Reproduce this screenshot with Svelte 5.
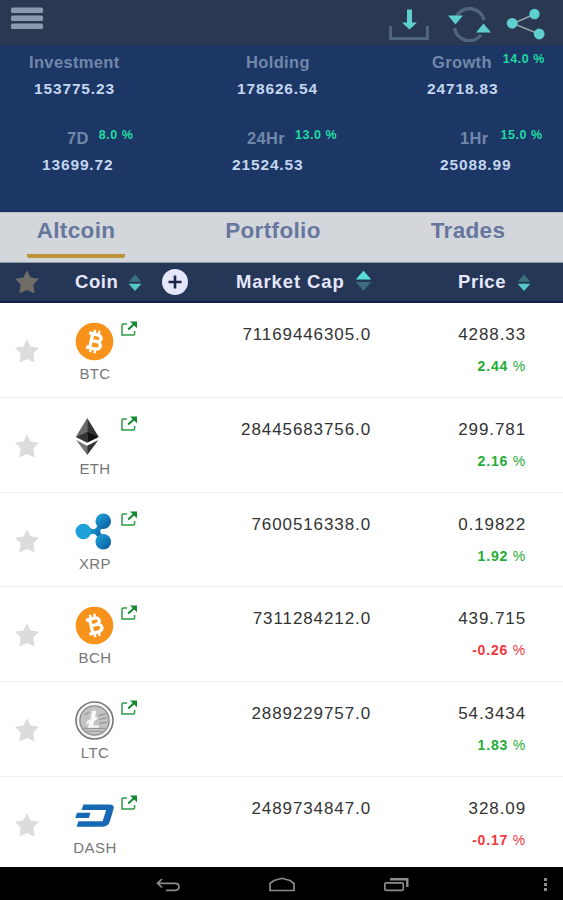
<script>
	const stats = [
		{ id: 'investment', label: 'Investment', value: '153775.23' },
		{ id: 'holding', label: 'Holding', value: '178626.54' },
		{ id: 'growth', label: 'Growth', change: '14.0 %', value: '24718.83' },
		{ id: 'week', label: '7D', change: '8.0 %', value: '13699.72' },
		{ id: 'day', label: '24Hr', change: '13.0 %', value: '21524.53' },
		{ id: 'hour', label: '1Hr', change: '15.0 %', value: '25088.99' }
	];

	const tabs = ['Altcoin', 'Portfolio', 'Trades'];
	let active = $state('Altcoin');

	const coins = [
		{ code: 'BTC', cap: '71169446305.0', price: '4288.33', change: '2.44' },
		{ code: 'ETH', cap: '28445683756.0', price: '299.781', change: '2.16' },
		{ code: 'XRP', cap: '7600516338.0', price: '0.19822', change: '1.92' },
		{ code: 'BCH', cap: '7311284212.0', price: '439.715', change: '-0.26' },
		{ code: 'LTC', cap: '2889229757.0', price: '54.3434', change: '1.83' },
		{ code: 'DASH', cap: '2489734847.0', price: '328.09', change: '-0.17' }
	];
</script>

{#snippet star()}
	<svg class="star" viewBox="0 0 26 26">
		<path d="M13 1.2 16.6 8.6 25 9.8 19.4 15.6 20.6 24.4 13 21 5.4 24.4 6.6 15.6 1 9.8 9.4 8.6Z" />
	</svg>
{/snippet}

{#snippet sort(up)}
	<svg class="sort" class:up viewBox="0 0 14 18">
		<path class="top" d="M7 0.6 13.4 7.8H.6Z" />
		<path class="bottom" d="M7 17 13.4 9.8H.6Z" />
	</svg>
{/snippet}

{#snippet bitcoin(angle)}
	<circle cx="20" cy="20" r="19.3" fill="#f7931a" />
	<g transform="rotate({angle} 20 20)" fill="none" stroke="#fff">
		<path stroke-width="3.4" d="M12.8 12.6H21.6C27.4 12.6 27.4 19.6 21.6 19.6H16.4M21.6 19.6C28.6 19.6 28.6 27.4 21.8 27.4H12.8M16.6 12.6V27.4" />
		<path stroke-width="2.5" d="M18 8.2V13M22.6 8.2V13M18 27V31.8M22.6 27V31.8" />
	</g>
{/snippet}

<div class="app">
	<header>
		<svg class="menu" viewBox="0 0 34 24">
			<g fill="#8b9bae">
				<rect x="1" y="0.5" width="32" height="5.5" rx="1.5" />
				<rect x="1" y="8.5" width="32" height="5.5" rx="1.5" />
				<rect x="1" y="16.5" width="32" height="5.5" rx="1.5" />
			</g>
		</svg>
		<svg class="download" viewBox="0 0 40 34">
			<path d="M1.6 19V31.4H38.4V19" fill="none" stroke="#52657f" stroke-width="3" />
			<path d="M18 2.5H23V15.5H28L20.5 22.5 13 15.5H18Z" fill="#5ecfcf" />
		</svg>
		<svg class="refresh" viewBox="0 0 44 36">
			<g fill="none" stroke="#52657f" stroke-width="3.4">
				<path d="M8 11A15 15 0 0 1 36 14" />
				<path d="M6.5 22A15 15 0 0 0 33 29" />
			</g>
			<path d="M0 9.5H15L7.5 18.5ZM28 26.5H43L35.5 17.5Z" fill="#5ecfcf" />
		</svg>
		<svg class="share" viewBox="0 0 40 34">
			<path d="M29 7 7 16.5 33 27" fill="none" stroke="#9aa3a8" stroke-width="1.4" />
			<g fill="#5ecfcf">
				<circle cx="28.5" cy="7" r="5.2" />
				<circle cx="6.2" cy="16.3" r="5.4" />
				<circle cx="33.2" cy="27" r="5.4" />
			</g>
		</svg>
	</header>

	<section class="stats">
		{#each stats as stat}
			<div class="stat {stat.id}">
				<div class="label">
					{stat.label}
					{#if stat.change}<span>{stat.change}</span>{/if}
				</div>
				<div class="value">{stat.value}</div>
			</div>
		{/each}
	</section>

	<nav class="tabs">
		{#each tabs as tab}
			<button class:active={tab === active} onclick={() => (active = tab)}>{tab}</button>
		{/each}
	</nav>

	<div class="head">
		<div class="fav">{@render star()}</div>
		<div class="h-coin">Coin {@render sort(false)}</div>
		<svg class="add" viewBox="0 0 28 28">
			<circle cx="14" cy="14" r="13" fill="#e6e6fb" />
			<path d="M14 7.5V20.5M7.5 14H20.5" stroke="#1c2547" stroke-width="2.6" />
		</svg>
		<div class="h-cap">Market Cap {@render sort(true)}</div>
		<div class="h-price">Price {@render sort(false)}</div>
	</div>

	<main>
		{#each coins as coin}
			<div class="row">
				<div class="fav">{@render star()}</div>
				<div class="coin">
					<svg viewBox="0 0 40 40">
						{#if coin.code === 'BTC'}
							{@render bitcoin(13)}
						{:else if coin.code === 'BCH'}
							{@render bitcoin(-14)}
						{:else if coin.code === 'ETH'}
							<path d="M12.5 1V16.5L.8 20.4Z" fill="#6b6b6b" />
							<path d="M12.5 1 24.4 20.4 12.5 16.5Z" fill="#343434" />
							<path d="M.8 20.4 12.5 15.5V26.5Z" fill="#333" />
							<path d="M24.4 20.4 12.5 15.5V26.5Z" fill="#111" />
							<path d="M1.2 23.5 12.5 29.5V39Z" fill="#777" />
							<path d="M24 23.5 12.5 29.5V39Z" fill="#333" />
						{:else if coin.code === 'XRP'}
							<defs>
								<linearGradient id="xrp" x1="0" y1="0" x2="1" y2="1">
									<stop offset="0" stop-color="#20a8dc" />
									<stop offset="1" stop-color="#0a559c" />
								</linearGradient>
							</defs>
							<g fill="url(#xrp)">
								<path d="M14 15.5C18 19 21.5 18.5 23.5 13L30 16.5C24.5 17 24.5 23 30 23.5L23.5 27C21.5 21.5 18 21 14 24.5Z" />
								<circle cx="29" cy="9.5" r="8" />
								<circle cx="29" cy="30.5" r="8" />
							</g>
							<circle cx="8.6" cy="20" r="8" fill="#1da1d8" />
						{:else if coin.code === 'LTC'}
							<circle cx="20" cy="20" r="19" fill="#f5f5f5" stroke="#777" stroke-width="1.6" />
							<circle cx="20" cy="20" r="15" fill="#c3c3c3" stroke="#888" stroke-width="1.3" />
							<path d="M24 15 32 13M25 19 33 17M25 23 33 22M9 28H31M12 31H28M10 14 15 11" stroke="#969696" stroke-width="1.2" />
							<path d="M17.5 10H22L20.5 17 23 16 22.2 19 19.6 20.5 18.8 25H25L24 27.5H13L15 22.5 11.5 24 12.4 20.6 15.8 19Z" fill="#f7f7f7" />
						{:else}
							<path fill="#1769b3" d="M8.6 8.6H35.5Q41 8.6 39.3 14L35.8 26Q34 31.6 28.5 31.6H1.6L3.5 25.8H28.3L32 14.4H6.7Z" />
							<path fill="#1769b3" d="M2 17.2H15.8L14.2 22.5H.3Z" />
						{/if}
					</svg>
					<div class="code">{coin.code}</div>
				</div>
				<svg class="link" viewBox="0 0 17 16">
					<path d="M6 3H2.2Q1 3 1 4.2V14H12.4Q13.6 14 13.6 12.8V10" fill="none" stroke="#2b9c46" stroke-width="1.5" />
					<path d="M7.2 8.6 13 3.2" stroke="#128a2e" stroke-width="2" />
					<path d="M9 .5H16V7.3Z" fill="#128a2e" />
				</svg>
				<div class="cap">{coin.cap}</div>
				<div class="price">
					{coin.price}
					<div class="change" class:down={coin.change.startsWith('-')}>{coin.change} <span>%</span></div>
				</div>
			</div>
		{/each}
	</main>

	<footer>
		<svg viewBox="0 0 423 33">
			<g fill="none" stroke="#8c8c8c" stroke-width="1.7">
				<path d="M22 12 17.5 16.3 22 20.5M18 16.3H35Q39 16.3 39 19.8T35 23.3H26" />
				<path d="M130 23.5V16.5L134 13.5 142 11.3 150 13.5 154 16.5V23.5Z" />
				<rect x="244.8" y="15.8" width="18.5" height="7.6" rx="1.5" />
				<path d="M250 12.3H267.3V20" stroke-width="2.4" />
			</g>
			<path d="M404 11h3v3h-3zM404 16h3v3h-3zM404 21h3v3h-3z" fill="#8c8c8c" />
		</svg>
	</footer>
</div>

<style>
	:global(body) {
		background: #fff;
	}

	.app {
		display: flex;
		flex-direction: column;
		width: 563px;
		height: 900px;
		overflow: hidden;
		font-family: 'Liberation Sans', Arial, sans-serif;
	}

	svg {
		display: block;
		flex: none;
	}

	header {
		display: flex;
		align-items: flex-start;
		height: 45px;
		flex: none;
		box-sizing: border-box;
		padding: 7px 17px 0 10px;
		background: #2a3852;
	}

	.menu {
		width: 34px;
		height: 24px;
		margin-right: auto;
	}

	.download {
		width: 40px;
		height: 34px;
		margin-right: 19px;
	}

	.refresh {
		width: 44px;
		height: 36px;
		margin: -1px 14px 0 0;
	}

	.share {
		width: 40px;
		height: 34px;
	}

	.stats {
		display: grid;
		grid-template-columns: 188px 188px 187px;
		grid-template-rows: 76px 76px;
		height: 167px;
		flex: none;
		box-sizing: border-box;
		padding-top: 4px;
		background: #1c3666;
		border-bottom: 1px solid #102d58;
		font-weight: bold;
		white-space: nowrap;
	}

	.label {
		display: flex;
		height: 27px;
		font-size: 16.5px;
		line-height: 26px;
		letter-spacing: 0.35px;
		color: #7188a9;
	}

	.label span {
		margin: -3px 0 0 10px;
		font-size: 12.5px;
		letter-spacing: 0.5px;
		color: #1fdca2;
	}

	.value {
		font-size: 15.5px;
		line-height: 26px;
		letter-spacing: 0.85px;
		color: #c3d6ee;
	}

	.investment {
		padding-left: 29px;
	}

	.investment .value {
		padding-left: 5px;
	}

	.holding {
		padding-left: 58px;
	}

	.holding .value {
		margin-left: -9px;
	}

	.growth {
		padding-left: 56px;
	}

	.growth .value {
		margin-left: -5px;
	}

	.growth .label span {
		margin-left: 11px;
	}

	.week {
		padding-left: 67px;
	}

	.week .value {
		margin-left: -25px;
	}

	.day {
		padding-left: 59px;
	}

	.day .value {
		margin-left: -15px;
	}

	.hour {
		padding-left: 84px;
	}

	.hour .value {
		margin-left: -20px;
	}

	.hour .label span {
		margin-left: 12px;
	}

	.tabs {
		display: flex;
		height: 51px;
		flex: none;
		box-sizing: border-box;
		padding-left: 27px;
		background: #d3d7dc;
		border-top: 1px solid #bcc5cf;
		border-bottom: 1px solid #8f9aa6;
	}

	.tabs button {
		width: 98px;
		height: 45px;
		padding: 0 0 5px;
		border: 0;
		border-bottom: 4px solid transparent;
		border-radius: 2px;
		background: none;
		font: bold 22.5px/28px 'Liberation Sans', Arial, sans-serif;
		letter-spacing: 0.35px;
		color: #66769d;
	}

	.tabs button:nth-child(2) {
		margin-left: 99px;
	}

	.tabs button:nth-child(3) {
		margin-left: 97px;
	}

	.tabs .active {
		border-bottom-color: #bd9239;
	}

	.head {
		display: flex;
		align-items: center;
		height: 40px;
		flex: none;
		box-sizing: border-box;
		background: #253657;
		border-bottom: 2px solid #15194b;
		font-size: 18.5px;
		font-weight: bold;
		letter-spacing: 0.55px;
		color: #e6e7fb;
		white-space: nowrap;
	}

	.fav {
		width: 54px;
	}

	.star {
		width: 26px;
		height: 26px;
		margin: 0 auto;
		fill: #dcdcdc;
	}

	.head .star {
		fill: #706c66;
	}

	.h-coin,
	.h-cap,
	.h-price {
		display: flex;
		align-items: center;
		gap: 10px;
	}

	.h-coin {
		width: 86px;
		margin-left: 21px;
	}

	.h-cap {
		width: 222px;
		margin-left: 47px;
		letter-spacing: 0.9px;
	}

	.add {
		width: 28px;
		height: 28px;
	}

	.sort {
		width: 14px;
		height: 18px;
		margin-top: 2px;
		fill: #55c9c9;
	}

	.sort .top {
		fill: #38717c;
	}

	.sort.up {
		width: 17px;
		height: 22px;
		margin-top: -3px;
	}

	.sort.up .top {
		fill: #58dddd;
	}

	.sort.up .bottom {
		fill: #3b6d7c;
	}

	.h-price .sort {
		margin-left: 1px;
	}

	main {
		height: 564px;
		flex: none;
		overflow: hidden;
	}

	.row {
		display: flex;
		height: 94.8px;
		box-sizing: border-box;
		padding-top: 20px;
		border-bottom: 1.5px solid #eee;
	}

	.row .star {
		margin-top: 15px;
	}

	.coin {
		width: 42px;
		margin-left: 20px;
	}

	.coin svg {
		width: 39px;
		height: 39px;
		margin: -1px 0 0 1px;
	}

	.code {
		display: flex;
		justify-content: center;
		margin-top: 4px;
		font-size: 15px;
		line-height: 18px;
		letter-spacing: 0.4px;
		color: #777;
	}

	.link {
		width: 17px;
		height: 16px;
		margin: -2px 0 0 5px;
	}

	.cap,
	.price {
		font-size: 17px;
		line-height: 24px;
		letter-spacing: 0.9px;
		text-align: right;
		color: #333;
	}

	.cap {
		width: 233px;
	}

	.price {
		width: 155px;
	}

	.change {
		margin-top: 7px;
		font-size: 14px;
		font-weight: bold;
		letter-spacing: 0.8px;
		color: #23ad36;
	}

	.change span {
		font-weight: normal;
	}

	.change.down {
		color: #f0383f;
	}

	footer {
		height: 33px;
		flex: none;
		padding-left: 140px;
		background: #000;
	}

	footer svg {
		width: 423px;
		height: 33px;
	}
</style>
